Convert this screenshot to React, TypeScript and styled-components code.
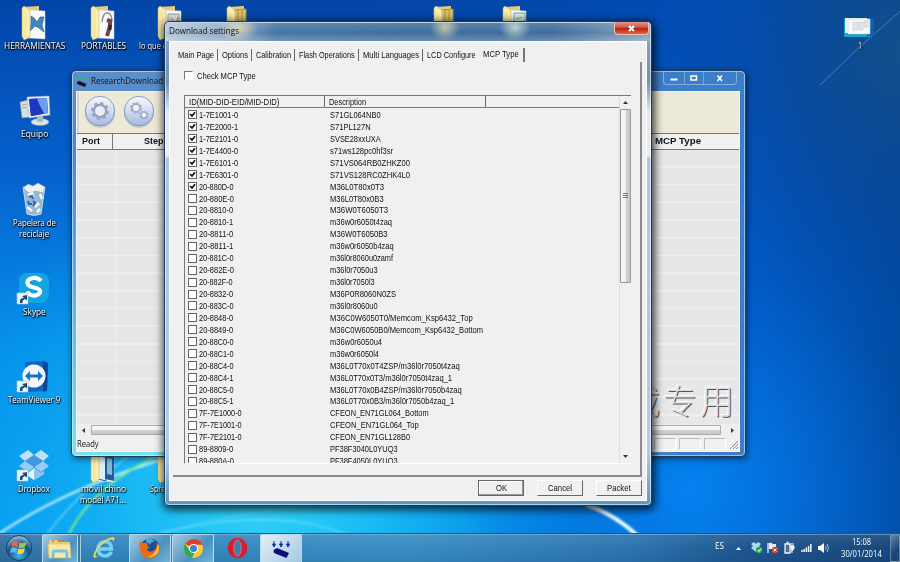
import React from "react";
import styled, { createGlobalStyle, css } from "styled-components";

const GlobalStyle = createGlobalStyle`
  body {
    margin: 0;
    overflow: hidden;
  }
  * {
    box-sizing: border-box;
  }
`;

const UI_FONT = `"Liberation Sans", Arial, sans-serif`;
const SEGOE = `"Open Sans", "Noto Sans", sans-serif`;

const rows: [string, string, number, number?][] = [
  ["1-7E1001-0", "S71GL064NB0", 51, 1],
  ["1-7E2000-1", "S71PL127N", 41, 1],
  ["1-7E2101-0", "SVSE28xxUXA", 51, 1],
  ["1-7E4400-0", "s71ws128pc0hf3sr", 63, 1],
  ["1-7E6101-0", "S71VS064RB0ZHKZ00", 80, 1],
  ["1-7E6301-0", "S71VS128RC0ZHK4L0", 80, 1],
  ["20-880D-0", "M36L0T80x0T3", 54, 1],
  ["20-880E-0", "M36L0T80x0B3", 54],
  ["20-8810-0", "M36W0T6050T3", 58],
  ["20-8810-1", "m36w0r6050t4zaq", 62],
  ["20-8811-0", "M36W0T6050B3", 58],
  ["20-8811-1", "m36w0r6050b4zaq", 64],
  ["20-881C-0", "m36l0r8060u0zamf", 63],
  ["20-882E-0", "m36l0r7050u3", 48],
  ["20-882F-0", "m36l0r7050l3", 45],
  ["20-8832-0", "M36P0R8060N0ZS", 66],
  ["20-883C-0", "m36l0r8060u0", 48],
  ["20-8848-0", "M36C0W6050T0/Memcom_Ksp6432_Top", 143],
  ["20-8849-0", "M36C0W6050B0/Memcom_Ksp6432_Bottom", 153],
  ["20-88C0-0", "m36w0r6050u4", 52],
  ["20-88C1-0", "m36w0r6050l4", 49],
  ["20-88C4-0", "M36L0T70x0T4ZSP/m36l0r7050t4zaq", 130],
  ["20-88C4-1", "M36L0T70x0T3/m36l0r7050t4zaq_1", 122],
  ["20-88C5-0", "M36L0T70x0B4ZSP/m36l0r7050b4zaq", 132],
  ["20-88C5-1", "M36L0T70x0B3/m36l0r7050b4zaq_1", 124],
  ["7F-7E1000-0", "CFEON_EN71GL064_Bottom", 99],
  ["7F-7E1001-0", "CFEON_EN71GL064_Top", 89],
  ["7F-7E2101-0", "CFEON_EN71GL128B0", 80],
  ["89-8809-0", "PF38F3040L0YUQ3", 68],
  ["89-880A-0", "PF38F4050L0YUQ3", 68],
];

const tabs: [string, number][] = [
  ["Main Page", 36],
  ["Options", 26],
  ["Calibration", 35],
  ["Flash Operations", 56],
  ["Multi Languages", 56],
  ["LCD Configure", 49],
  ["MCP Type", 36],
];

const Fit = ({ width, children }: { width: number; children: string }) => {
  const ref = React.useRef<HTMLSpanElement>(null);
  const [scale, setScale] = React.useState(1);
  React.useLayoutEffect(() => {
    if (ref.current) setScale(width / ref.current.offsetWidth);
  }, [width]);
  return (
    <FitBox $w={width}>
      <FitText ref={ref} style={{ transform: `scaleX(${scale})` }}>
        {children}
      </FitText>
    </FitBox>
  );
};

const idWidth = (id: string) => {
  if (id.length === 11) return 43;
  if (id.length === 10) return 39;
  return /[CDEA]/.test(id) ? 35 : 34;
};

const Folder = ({ kind }: { kind: string }) => (
  <svg width="26" height="36" viewBox={kind === "films" ? "-2 0 26 36" : "0 0 26 36"}>
    <path d="M2 2 L18 1 L18 30 L5 34 L2 31Z" fill="#e3cc78" />
    {kind !== "films" && <path d="M8 5 L24 6 L24 34 L8 33Z" fill="#f7f9fa" stroke="#c9d3da" strokeWidth=".5" />}
    {kind === "tools" && (
      <path d="M10 11 L13 13 L16 17 L19 12 L23 12 L21 20 L23 27 L18 23 L14 21 L9 26 L10 19Z" fill="#4285bd" stroke="#2c659c" strokeWidth=".7" />
    )}
    {kind === "knife" && (
      <g fill="none">
        <path d="M12 17 Q13 7 18 8 Q22 9 22 17" stroke="#858b90" strokeWidth="1.400" />
        <path d="M17 15 L20 16 V21 L17 31" stroke="#77424a" strokeWidth="4" />
        <path d="M20 20 V25" stroke="#2d2326" strokeWidth="3" />
      </g>
    )}
    {kind === "docs" && <path d="M11 9 H22 V31 H11Z M14 13 L19 18 L21 12" fill="#dfe2e0" stroke="#a4a08f" />}
    {kind === "films" && <path d="M8 5 L20 4 V33 H8Z M12 5 V33 M16 5 V33" fill="#d7c36d" stroke="#a8923f" />}
    {kind === "green" && <path d="M12 8 H23 V30 H12Z M14 14 L20 12" fill="#dcebe3" stroke="#6aa889" />}
    {kind === "phone" && (
      <g>
        <path d="M8 8 L16 9 V33 L8 31Z" fill="#d9eef5" stroke="#2f5d85" />
        <path d="M15 6 L24 8 V33 L15 31Z" fill="#1d5d9e" />
        <path d="M17 10 L22 11 V27 L17 26Z" fill="#7fb9db" />
      </g>
    )}
    <path d="M1 3 L3 1 L9 5 L9 32 L3 35 L1 31Z" fill="#f7e8a3" stroke="#d6b95c" strokeWidth=".5" />
    <path d="M3 4 L7 7 V31" fill="none" stroke="#fff8cf" />
  </svg>
);

const Shortcut = () => (
  <g>
    <rect x="1" y="21" width="11" height="11" fill="#f2f6fa" stroke="#a8b9cc" strokeWidth=".6" />
    <path d="M4 31 Q3 26 8 26 L6 24 L11 23 L11 28.500 L9 27 Q6 28 6.500 31Z" fill="#174b82" />
  </g>
);

const Computer = () => (
  <svg width="34" height="32" viewBox="0 0 34 32">
    <path d="M3 7 L11 5 L13 22 L5 23Z" fill="#dcdedb" stroke="#8d949a" strokeWidth=".6" />
    <path d="M5 10 L10 9 M5 13 L10 12" stroke="#9aa" />
    <ellipse cx="23" cy="27" rx="9" ry="3.500" fill="#dde3e8" stroke="#8e9ba7" strokeWidth=".6" />
    <path d="M20 19 H26 V27 H20Z" fill="#aeb8c2" />
    <path d="M10 2 L32 1 L33 20 L12 23Z" fill="#e8edf0" stroke="#a7b2bd" strokeWidth=".5" />
    <path d="M12 4 L30 3 L31 18 L14 21Z" fill="#132fae" />
    <path d="M19 3.500 L30 3 L31 18 L27 18.500Z" fill="#6e9bea" />
    <path d="M12 4 L20 3.500 L26 19 L14 21Z" fill="#1c39c0" />
  </svg>
);

const Bin = () => (
  <svg width="28" height="34" viewBox="0 0 28 34">
    <path d="M3 4 L25 4 L21 31 Q14 34 7 31Z" fill="#a9c1d2" fillOpacity=".9" stroke="#dcebf4" strokeWidth=".8" />
    <path d="M3 5 L8 1 L13 3 L18 0 L25 4 L23 10 L16 8 L9 10Z" fill="#eef2f3" stroke="#93a4ae" strokeWidth=".6" />
    <path d="M8 12 L12 10 L13 14 M20 11 L22 16 M19 20 L15 24 M7 24 L12 28 M20 26 L17 29" stroke="#f4f8fa" strokeWidth="2.500" fill="none" />
    <path d="M9 14 L12 13 L13 16 M8 18 L9 21 L12 21 M13 18 L15 20 L13 23" stroke="#2c63c8" strokeWidth="2" fill="none" />
  </svg>
);

const Skype = () => (
  <svg width="36" height="34" viewBox="0 0 36 34">
    <rect x="3" y="1" width="30" height="30" rx="8" fill="#12a5df" />
    <path d="M25 9 Q22 5.500 17 6 Q11 7 11.500 11 Q12 14.500 18 15.500 Q25 17 24 20.500 Q22 24 17 23.500 Q12.500 23 11 19.500" fill="none" stroke="#fff" strokeWidth="4.200" />
    <Shortcut />
  </svg>
);

const TeamViewer = () => (
  <svg width="36" height="34" viewBox="0 0 36 34">
    <path d="M9 2 L27 1 L32 3 L31 31 L10 32Z" fill="#1265c5" />
    <path d="M27 1 L32 3 L31 31 L27 32Z" fill="#0a489c" />
    <circle cx="18" cy="16" r="11.500" fill="#f4f8fc" />
    <path d="M9 16 L14 11 V14.500 H22 V11 L27 16 L22 21 V17.500 H14 V21Z" fill="#1675c8" />
    <Shortcut />
  </svg>
);

const DropboxIcon = () => (
  <svg width="36" height="34" viewBox="0 0 36 34">
    <path d="M3 7 L12 1 L18 6 L9 12Z M18 6 L25 1 L33 7 L27 12Z" fill="#bfe0fa" />
    <path d="M3 17 L9 12 L18 18 L12 23Z M18 18 L27 12 L33 17 L25 23Z" fill="#9acbf3" />
    <path d="M9 12 L18 6 L27 12 L18 18Z" fill="#4596df" />
    <path d="M9 22 L12 24 L18 19 L25 24 L28 22 V25 L18 31 L9 25Z" fill="#e6f5ff" />
    <path d="M18 19 L25 24 L28 22 V25 L18 31Z" fill="#8ec0ea" />
    <Shortcut />
  </svg>
);

const Stack = () => (
  <svg width="34" height="32" viewBox="1 -9 34 32">
    <rect x="2" y="3" width="26" height="18" fill="#12a2ce" />
    <rect x="25" y="2" width="7" height="18" fill="#0a60ba" />
    <path d="M3 2 H25 V17 H3Z" fill="#f2f8fa" />
    <path d="M6 3 H28 V18 H6Z" fill="#f8fafa" stroke="#b7ccd5" strokeWidth=".6" />
    <path d="M11 6 H16 V14 H11Z M17 6 H21 V14 H17Z M22 5 H26 V11 H22Z" fill="#e3e6e5" stroke="#b9c2c4" strokeWidth=".5" />
  </svg>
);

const ChipIcon = ({ size, green }: { size: number; green?: boolean }) => (
  <svg width={size} height={size} viewBox="0 0 18 18">
    <path
      d="M2 1 V5 M9 1 V5 M16 1 V5 M0.500 4 H3.500 L2 7Z M7.500 4 H10.500 L9 7Z M14.500 4 H17.500 L16 7Z"
      stroke={green ? "#25c968" : "#0c2bb0"}
      fill={green ? "#25c968" : "#0c2bb0"}
    />
    <path d="M1.500 10 L5 8 L17 13 L14.500 18 L2 13Z" fill={green ? "#10141b" : "#0a0f78"} />
  </svg>
);

const Gear = ({ cx, cy, r }: { cx: number; cy: number; r: number }) => (
  <g fill="none" stroke="#98a4be">
    <circle cx={cx} cy={cy} r={r} strokeWidth={r * 0.38} fill="#e9eef8" />
    <circle cx={cx} cy={cy} r={r * 1.28} strokeWidth={r * 0.35} strokeDasharray={`${r * 0.5} ${r * 0.505}`} />
  </g>
);

const RoundGear = ({ double }: { double?: boolean }) => (
  <svg width="32" height="34" viewBox="0 0 32 34">
    <defs>
      <linearGradient id="ball" x1="0" y1="0" x2="0" y2="1">
        <stop offset="0" stopColor="#f8f9fd" />
        <stop offset=".45" stopColor="#d7def1" />
        <stop offset="1" stopColor="#a5b9df" />
      </linearGradient>
    </defs>
    <ellipse cx="16" cy="18" rx="15" ry="15" fill="#99a5ba" fillOpacity=".5" />
    <circle cx="16" cy="16" r="14.700" fill="url(#ball)" stroke="#7f92bd" strokeWidth=".9" />
    {double ? (
      <g>
        <Gear cx={13} cy={13} r={4} />
        <Gear cx={21} cy={20} r={3} />
      </g>
    ) : (
      <Gear cx={16} cy={16} r={6.2} />
    )}
  </svg>
);

const Wallpaper = () => (
  <WallpaperSvg viewBox="0 0 900 562" width="900" height="562">
    <defs>
      <linearGradient id="sky" x1="0" y1="0" x2="0" y2="1">
        <stop offset="0" stopColor="#0345a8" />
        <stop offset=".28" stopColor="#055fcb" />
        <stop offset=".62" stopColor="#0590ea" />
        <stop offset="1" stopColor="#08a0f2" />
      </linearGradient>
      <linearGradient id="dark" x1="0" y1="0" x2="1" y2="0">
        <stop offset=".4" stopColor="#0048a8" stopOpacity="0" />
        <stop offset=".83" stopColor="#0052c0" stopOpacity=".82" />
        <stop offset="1" stopColor="#00459c" stopOpacity=".9" />
      </linearGradient>
      <radialGradient id="glow" gradientUnits="userSpaceOnUse" cx="260" cy="490" r="330">
        <stop offset="0" stopColor="#35d4f6" />
        <stop offset=".35" stopColor="#1fc3f6" stopOpacity=".8" />
        <stop offset="1" stopColor="#06a0f2" stopOpacity="0" />
      </radialGradient>
      <radialGradient id="mid" gradientUnits="userSpaceOnUse" cx="690" cy="490" r="230">
        <stop offset="0" stopColor="#0482f0" />
        <stop offset="1" stopColor="#0670e2" stopOpacity="0" />
      </radialGradient>
      <radialGradient id="topright" gradientUnits="userSpaceOnUse" cx="910" cy="50" r="260">
        <stop offset="0" stopColor="#14508a" />
        <stop offset="1" stopColor="#074292" stopOpacity="0" />
      </radialGradient>
      <filter id="soft">
        <feGaussianBlur stdDeviation="1" />
      </filter>
    </defs>
    <rect width="900" height="562" fill="url(#sky)" />
    <rect width="900" height="562" fill="url(#dark)" />
    <rect width="900" height="562" fill="url(#glow)" />
    <rect width="900" height="562" fill="url(#mid)" />
    <rect width="900" height="562" fill="url(#topright)" />
    <g fill="none" filter="url(#soft)">
      <path d="M-10 540 Q60 490 170 457" stroke="#d4f8ff" strokeWidth="2.500" strokeOpacity=".8" />
      <path d="M46 536 Q75 495 130 455" stroke="#a5edff" strokeWidth="1.200" strokeOpacity=".7" />
      <path d="M68 536 Q92 485 165 452" stroke="#79ed8b" strokeWidth="2" />
      <path d="M160 533 Q280 505 350 536" stroke="#a5f4ff" strokeOpacity=".4" strokeWidth="1.500" />
      <path d="M160 533 Q350 480 600 510" stroke="#a5f4ff" strokeOpacity=".3" />
      <path d="M585 504 Q615 514 640 538" stroke="#effcff" strokeWidth="4" />
    </g>
    <path d="M820 85 Q860 45 905 7" stroke="#81acd2" strokeOpacity=".5" fill="none" />
  </WallpaperSvg>
);

const icons = [
  { x: 34, y: 4, label: ["HERRAMIENTAS"], w: [61], art: <Folder kind="tools" /> },
  { x: 103, y: 4, label: ["PORTABLES"], w: [45], art: <Folder kind="knife" /> },
  { x: 170, y: 4, label: ["lo que descargo..."], w: [62], art: <Folder kind="docs" /> },
  { x: 237, y: 4, label: [], w: [], art: <Folder kind="films" /> },
  { x: 444, y: 4, label: [], w: [], art: <Folder kind="films" /> },
  { x: 515, y: 4, label: [], w: [], art: <Folder kind="green" /> },
  { x: 860, y: 4, label: ["1"], w: [4], art: <Stack /> },
  { x: 34, y: 92, label: ["Equipo"], w: [27], art: <Computer /> },
  { x: 34, y: 181, label: ["Papelera de", "reciclaje"], w: [43, 30], art: <Bin /> },
  { x: 34, y: 270, label: ["Skype"], w: [23], art: <Skype /> },
  { x: 34, y: 358, label: ["TeamViewer 9"], w: [52], art: <TeamViewer /> },
  { x: 34, y: 447, label: ["Dropbox"], w: [32], art: <DropboxIcon /> },
  { x: 103, y: 447, label: ["movil chino", "model A71..."], w: [45, 46], art: <Folder kind="phone" /> },
  { x: 170, y: 447, label: ["Spreadtrum"], w: [40], art: <Folder kind="docs" /> },
];

const ExplorerIcon = () => (
  <svg width="26" height="23" viewBox="0 0 26 23">
    <path d="M2 3 H10 L12 5 H23 V21 H2Z" fill="#e9ce72" />
    <path d="M5 4 H13 M15 4 H21" stroke="#df6a46" strokeWidth="1.500" strokeDasharray="2 4" />
    <path d="M1 7 H23 L24 21 H2Z" fill="#f8e9a4" stroke="#d6bc5b" strokeWidth=".6" />
    <path d="M6 21 V16 Q6 14 8 14 H18 Q20 14 20 16 V21" fill="none" stroke="#76c3e9" strokeWidth="3" />
  </svg>
);
const IeIcon = () => (
  <svg width="24" height="24" viewBox="0 0 24 24">
    <path d="M19.500 16 Q17 20 12.500 20 Q6 19 6 12.500 Q7 6 13 5.500 Q19.500 6 19.500 13 H8" fill="none" stroke="#72d2fa" strokeWidth="3.600" />
    <path d="M3 22 Q-1 21 5 12 Q13 2 21 1 Q24 2 21 6 Q22 2.500 17 4 Q8 8 4 17 Q2 21 6 20 Q5 21 3 22Z" fill="#f5d64a" />
  </svg>
);
const FirefoxIcon = () => (
  <svg width="23" height="23" viewBox="0 0 23 23">
    <circle cx="12" cy="11" r="9.500" fill="#184e95" />
    <path d="M8 2 Q14 0 17 5 Q13 4 12 8 Q10 5 8 5Z" fill="#53a5d8" />
    <path d="M2 4 L5 6 Q8 5 10 7 L9 9 L12 10 L9 12 Q10 16 15 14 Q20 12 18 5 Q24 11 20 17 Q15 23 8 21 Q0 17 2 4Z" fill="#e96b16" />
    <path d="M20 7 Q23 12 19 17 Q15 21 10 20 Q18 18 20 7Z" fill="#f9bd3a" />
  </svg>
);
const ChromeIcon = () => (
  <svg width="21" height="21" viewBox="0 0 22 22">
    <circle cx="11" cy="11" r="10" fill="#f8ce38" />
    <path d="M11 11 L2 6 Q6 1 11 1 Q18 1 20.500 7 H11Z" fill="#dc4032" />
    <path d="M2 6 L8 14 L12 15 L9.500 21 Q1 19 1 11 Q1 8 2 6Z" fill="#35a554" />
    <circle cx="11" cy="11" r="4.800" fill="#fff" />
    <circle cx="11" cy="11" r="3.700" fill="#3e82d7" />
  </svg>
);
const OperaIcon = () => (
  <svg width="21" height="22" viewBox="0 0 21 22">
    <ellipse cx="10.500" cy="11" rx="9.800" ry="10.300" fill="#d91d2b" />
    <ellipse cx="10.500" cy="11" rx="3.700" ry="8.300" fill="#3e7cae" stroke="#f5929a" strokeWidth=".6" />
  </svg>
);
const StartOrb = () => (
  <svg width="28" height="28" viewBox="0 0 28 28">
    <defs>
      <radialGradient id="orb" cx=".5" cy=".8" r=".75">
        <stop offset="0" stopColor="#38b7df" />
        <stop offset=".6" stopColor="#185386" />
        <stop offset="1" stopColor="#8ab7d5" />
      </radialGradient>
    </defs>
    <circle cx="14" cy="14" r="12.500" fill="url(#orb)" stroke="#123f69" />
    <path d="M7.500 8 Q10.500 6 13.500 8 L12.500 13 Q9.500 11.500 6.500 13Z" fill="#ee653b" />
    <path d="M14.500 8.500 Q18 10 21.500 8 L20 13 Q17 15 13.500 13.500Z" fill="#95cb4f" />
    <path d="M6 14 Q9 12.500 12.300 14 L11 19 Q8 17.500 5 19Z" fill="#59b6ee" />
    <path d="M13.300 14.500 Q16.500 16 20 14 L18.500 19 Q15 21 12 19.500Z" fill="#f7ce45" />
  </svg>
);
const TrayIcons = () => (
  <svg width="94" height="16" viewBox="0 0 94 16">
    <path d="M0 10 L2.500 7 L5 10Z" fill="#fff" />
    <path d="M15 4 L18 2 L20 4 L22 2 L25 4 L23 6 L25 8 L20 12 L15 8 L17 6Z" fill="#a4e2fa" />
    <circle cx="23" cy="10" r="3.200" fill="#34a94b" />
    <path d="M21.500 10 L23 11.500 L25 8.500" stroke="#fff" fill="none" />
    <path d="M32 3 V13" stroke="#fff" strokeWidth="1.200" />
    <path d="M33 3 Q35 2 37 4 H40 V9 H33Z" fill="#e9eef4" />
    <circle cx="39" cy="10" r="3.200" fill="#d7422f" />
    <path d="M37.600 8.600 L40.400 11.400 M40.400 8.600 L37.600 11.400" stroke="#fff" />
    <path d="M49 4 H54 V13 H49Z M50.500 2.500 H52.500" fill="#506d8d" stroke="#f1f5f8" strokeWidth="1.300" />
    <path d="M54 6 H58 V9 L56 11 V13 M55 6 V3 M57 6 V3" fill="#f1f5f8" stroke="#f1f5f8" />
    <path d="M66 12 V10 M68.200 12 V9 M70.400 12 V7.500 M72.600 12 V6 M74.800 12 V4" stroke="#f2f7fb" strokeWidth="1.500" />
    <path d="M82 6 H84 L88 3 V13 L84 10 H82Z" fill="#fff" />
    <path d="M89.500 6 Q91 8 89.500 10 M91 4 Q94 8 91 12" stroke="#c9dceb" fill="none" strokeWidth=".8" />
  </svg>
);

const Arrow = ({ dir }: { dir: "up" | "down" | "left" | "right" }) => {
  const paths = { up: "M1 5L3.500 2L6 5Z", down: "M1 2L3.500 5L6 2Z", left: "M5 1L2 3.500L5 6Z", right: "M2 1L5 3.500L2 6Z" };
  return (
    <svg width="7" height="7" viewBox="0 0 7 7">
      <path d={paths[dir]} fill="#34373d" />
    </svg>
  );
};

const App = () => (
  <Desktop>
    <GlobalStyle />
    <Wallpaper />
    {icons.map((icon, i) => (
      <DesktopIcon key={i} $x={icon.x} $y={icon.y}>
        <IconArt>{icon.art}</IconArt>
        {icon.label.map((line, n) => (
          <IconLabel key={line}>
            <Fit width={icon.w[n]}>{line}</Fit>
          </IconLabel>
        ))}
      </DesktopIcon>
    ))}

    <MainWindow>
      <MainTitle>
        <ChipIcon size={11} green />
        <Fit width={72}>ResearchDownload</Fit>
        <CaptionButtons>
          <CaptionButton $w={20}>
            <svg width="8" height="8"><path d="M0.500 5.500H7.500" stroke="#fff" strokeWidth="2" /></svg>
          </CaptionButton>
          <CaptionButton $w={19}>
            <svg width="8" height="8"><rect x="1" y="2" width="5.500" height="4" fill="none" stroke="#fff" strokeWidth="1.500" /></svg>
          </CaptionButton>
          <CaptionButton $w={33}>
            <svg width="8" height="8"><path d="M1.500 1.500L6 7M6 1.500L1.500 7" stroke="#fff" strokeWidth="1.600" /></svg>
          </CaptionButton>
        </CaptionButtons>
      </MainTitle>
      <MainClient>
        <Toolbar>
          <RoundGear />
          <RoundGear double />
        </Toolbar>
        <GridHeader>
          <GridCell $w={36}><Fit width={18}>Port</Fit></GridCell>
          <GridCell $w={542} $step><Fit width={20}>Step</Fit></GridCell>
          <GridCell $w={85} $last><Fit width={46}>MCP Type</Fit></GridCell>
        </GridHeader>
        <GridBody>
          <GridColumn />
          <Watermark>载专用</Watermark>
        </GridBody>
        <HScroll>
          <Arrow dir="left" />
          <HThumb />
          <Arrow dir="right" />
        </HScroll>
        <StatusBar>
          <Fit width={22}>Ready</Fit>
          <StatusPanes>
            <Pane />
            <Pane />
            <Pane />
            <svg width="10" height="10"><path d="M1 9L9 1M4 9L9 4M7 9L9 7" stroke="#8d8d8d" /></svg>
          </StatusPanes>
        </StatusBar>
      </MainClient>
    </MainWindow>

    <Dialog>
      <DialogTitle>
        <Fit width={70}>Download settings</Fit>
        <CloseButton>
          <svg width="9" height="9"><path d="M2 2L7 7M7 2L2 7" stroke="#fff" strokeWidth="1.900" /></svg>
        </CloseButton>
      </DialogTitle>
      <DialogClient>
        <TabRow>
          {tabs.map(([name, width], i) => (
            <Tab key={name} $active={i === 6} $beforeActive={i === 5}>
              <Fit width={width}>{name}</Fit>
            </Tab>
          ))}
        </TabRow>
        <TabSheet>
          <CheckLine>
            <BigCheck />
            <Fit width={59}>Check MCP Type</Fit>
          </CheckLine>
          <ListFrame>
            <ListMain>
              <ListHeader>
                <HeaderCell $w={140}><Fit width={90}>ID(MID-DID-EID/MID-DID)</Fit></HeaderCell>
                <HeaderCell $w={161}><Fit width={37}>Description</Fit></HeaderCell>
              </ListHeader>
              <ListBody>
                {rows.map(([id, desc, width, checked]) => (
                  <ListRow key={id}>
                    <Check>
                      {checked && (
                        <svg width="7" height="7"><path d="M1 3L3 5L6 1.300" fill="none" stroke="#111" strokeWidth="1.700" /></svg>
                      )}
                    </Check>
                    <IdCell><Fit width={idWidth(id)}>{id}</Fit></IdCell>
                    <Fit width={width}>{desc}</Fit>
                  </ListRow>
                ))}
              </ListBody>
            </ListMain>
            <VScroll>
              <Arrow dir="up" />
              <VThumb>
                <svg width="5" height="6"><path d="M0 .5H5M0 2.500H5M0 4.500H5" stroke="#55585f" strokeWidth=".8" /></svg>
              </VThumb>
              <Arrow dir="down" />
            </VScroll>
          </ListFrame>
        </TabSheet>
        <ButtonRow>
          <Button $primary><Fit width={11}>OK</Fit></Button>
          <Button><Fit width={24}>Cancel</Fit></Button>
          <Button><Fit width={24}>Packet</Fit></Button>
        </ButtonRow>
      </DialogClient>
    </Dialog>

    <Taskbar>
      <Orb><StartOrb /></Orb>
      <Task $w={36} $open $stacked><ExplorerIcon /></Task>
      <Task $w={49}><IeIcon /></Task>
      <Task $w={42} $open><FirefoxIcon /></Task>
      <Task $w={42} $open><ChromeIcon /></Task>
      <Task $w={44}><OperaIcon /></Task>
      <Task $w={42} $open $active><ChipIcon size={18} /></Task>
      <Tray>
        <Language><Fit width={9}>ES</Fit></Language>
        <TrayIcons />
        <Clock>
          <Fit width={19}>15:08</Fit>
          <Fit width={41}>30/01/2014</Fit>
        </Clock>
        <ShowDesktop />
      </Tray>
    </Taskbar>
  </Desktop>
);

export default App;

const FitBox = styled.span<{ $w: number }>`
  display: block;
  flex: none;
  width: ${({ $w }) => $w}px;
  white-space: nowrap;
`;
const FitText = styled.span`
  display: inline-block;
  transform-origin: 0 50%;
`;
const Desktop = styled.div`
  position: relative;
  width: 900px;
  height: 562px;
  overflow: hidden;
  font: 9px/12px ${UI_FONT};
  color: #111;
`;
const WallpaperSvg = styled.svg`
  position: absolute;
  inset: 0;
`;
const DesktopIcon = styled.div<{ $x: number; $y: number }>`
  position: absolute;
  left: ${({ $x }) => $x - 35}px;
  top: ${({ $y }) => $y}px;
  width: 70px;
  display: flex;
  flex-direction: column;
  align-items: center;
`;
const IconArt = styled.div`
  height: 37px;
  display: flex;
  align-items: center;
  justify-content: center;
  svg {
    display: block;
  }
`;
const IconLabel = styled.div`
  font: 9px/10.5px ${SEGOE};
  color: #fff;
  text-shadow: 0 1px 2px #000, 1px 1px 1px #000, 0 0 2px #0008;
`;
const windowFrame = css`
  position: absolute;
  display: flex;
  flex-direction: column;
  border: 1px solid #253c58;
  border-radius: 5px;
`;
const MainWindow = styled.div`
  ${windowFrame}
  left: 71px;
  top: 70px;
  width: 675px;
  height: 387px;
  padding: 0 5px 4px 4px;
  background: linear-gradient(90deg, #3b7ec900 60%, #3b7ec9 90%),
    linear-gradient(#5b8ecd 0, #5286c6 80px, #59a5de 180px, #78e2ed 100%);
  box-shadow: inset 0 0 0 1px #ffffff80, 1px 2px 6px #0008;
`;
const MainTitle = styled.div`
  height: 20px;
  display: flex;
  align-items: center;
  gap: 4px;
  font: 9px/12px ${SEGOE};
  flex: none;
`;
const CaptionButtons = styled.div`
  display: flex;
  align-self: flex-start;
  margin: 1px 3px 0 auto;
  border: 1px solid #a9c6e4aa;
  border-top: 0;
  border-radius: 0 0 4px 4px;
`;
const CaptionButton = styled.div<{ $w: number }>`
  width: ${({ $w }) => $w}px;
  height: 12px;
  display: flex;
  align-items: center;
  justify-content: center;
  & + & {
    border-left: 1px solid #a9c6e488;
  }
`;
const MainClient = styled.div`
  flex: 1;
  min-height: 0;
  display: flex;
  flex-direction: column;
  background: #f0f0f0;
  border: 1px solid #eef4f9;
`;
const Toolbar = styled.div`
  height: 41px;
  flex: none;
  display: flex;
  gap: 7px;
  padding: 3px 5px;
  background: #ece9d8;
  border-left: 2px solid #d5d4cb;
`;
const GridHeader = styled.div`
  height: 17px;
  flex: none;
  display: flex;
  border: 1px solid #777;
  border-width: 1px 0 1.5px;
  background: #f1f1f1;
  font-weight: bold;
  font-size: 9.5px;
`;
const GridCell = styled.div<{ $w: number; $step?: boolean; $last?: boolean }>`
  width: ${({ $w }) => $w}px;
  padding: 1px 0 0 ${({ $step, $last }) => ($step ? 31 : $last ? 1 : 5)}px;
  border-right: ${({ $step, $last }) => ($step || $last ? "0" : "1px solid #777")};
`;
const GridBody = styled.div`
  position: relative;
  flex: 1;
  display: flex;
  background: repeating-linear-gradient(#e7e7e7 0 16px, #efefef 16px 17.7px);
`;
const GridColumn = styled.div`
  width: 39px;
  border-right: 1px solid #f0f0f0;
`;
const Watermark = styled.div`
  position: absolute;
  right: 2px;
  bottom: 3px;
  font: 300 34px/42px "Noto Sans CJK SC", sans-serif;
  letter-spacing: 3px;
  color: #dcdcdc;
  text-shadow: 1px 1px 0 #555, -1px -1px 0 #fff;
`;
const HScroll = styled.div`
  height: 12px;
  flex: none;
  display: flex;
  align-items: center;
  gap: 4px;
  padding: 0 3px;
  background: #eee;
`;
const HThumb = styled.div`
  flex: 1;
  height: 10px;
  margin-right: 4px;
  border: 1px solid #aaa;
  border-radius: 1px;
  background: linear-gradient(#f6f6f6 45%, #d3d3d6 55%, #c6c6ca);
`;
const StatusBar = styled.div`
  height: 15px;
  flex: none;
  display: flex;
  align-items: center;
  justify-content: space-between;
  padding-top: 1px;
  font: 9px/12px ${SEGOE};
`;
const StatusPanes = styled.div`
  display: flex;
  align-items: flex-end;
  gap: 3px;
`;
const Pane = styled.div`
  width: 22px;
  height: 12px;
  border: 1px solid #bcbcbc;
  border-right-color: #fff;
  border-bottom-color: #fff;
`;
const Dialog = styled.div`
  ${windowFrame}
  left: 164px;
  top: 21px;
  width: 488px;
  height: 485px;
  padding: 0 4px 4px;
  background: linear-gradient(#8ba9cb 0, #6e91b7 60px, #dfe9f2 90px, #e7eef5 134px, #aac6e4 136px, #afcbea 430px, #5596c4 100%);
  box-shadow: inset 0 0 0 1px #ffffff90, 1px 2px 8px 2px #000b;
`;
const DialogTitle = styled.div`
  flex: none;
  height: 19px;
  margin: 0 -3px;
  padding: 0 1px 2px 3px;
  display: flex;
  align-items: center;
  justify-content: space-between;
  font: 9.5px/12px ${SEGOE};
  border-radius: 4px 4px 0 0;
  border-top: 1px solid #c2d5e7;
  background: radial-gradient(ellipse 20px 14px at 72px 5px, #d8d5b4, #d8d5b400),
    radial-gradient(ellipse 15px 14px at 279px 4px, #c1c8a5, #c1c8a500),
    radial-gradient(ellipse 16px 14px at 349px 4px, #bcd0cb, #bcd0cb00),
    linear-gradient(#ffffff20, #ffffff05 45%, #00306010 50%, #ffffff35),
    linear-gradient(90deg, #b9cadb 0, #91abc8 65px, #4877a8 110px, #426f9f 50%, #436f9f 80%, #8ba4be);
`;
const CloseButton = styled.div`
  width: 35px;
  height: 13px;
  align-self: flex-start;
  margin-top: -1px;
  display: flex;
  align-items: center;
  justify-content: center;
  border: 1px solid #ecc0b7;
  border-top: 0;
  border-radius: 0 0 4px 4px;
  background: linear-gradient(#e09584, #cf5a49 45%, #b6200d 50%, #db6547);
`;
const DialogClient = styled.div`
  flex: 1;
  min-height: 0;
  display: flex;
  flex-direction: column;
  padding: 7px 4px 0 3px;
  border: 1px solid #fff;
  background: #f0f0f0;
`;
const TabRow = styled.div`
  display: flex;
  height: 13px;
  flex: none;
  padding-left: 5px;
`;
const Tab = styled.div<{ $active?: boolean; $beforeActive?: boolean }>`
  padding-right: 3px;
  margin-right: 4px;
  height: 12px;
  border-right: 1px solid ${({ $beforeActive }) => ($beforeActive ? "transparent" : "#666")};
  ${({ $active }) => $active && css`
    margin-top: -1px;
    margin-left: -1px;
    padding-right: 4px;
    height: 14px;
    border-right-width: 2px;
    border-right-color: #777;
  `}
`;
const TabSheet = styled.div`
  height: 415px;
  flex: none;
  display: flex;
  flex-direction: column;
  padding: 7px 9px 0 11px;
  border-right: 2px solid #8a8a8a;
  border-bottom: 2px solid #8a8a8a;
`;
const CheckLine = styled.div`
  display: flex;
  align-items: center;
  gap: 4px;
  height: 13px;
  margin-bottom: 13px;
`;
const BigCheck = styled.div`
  width: 9px;
  height: 9px;
  border: 1px solid #777;
  border-right-color: #fff;
  border-bottom-color: #fff;
  background: #fff;
`;
const ListFrame = styled.div`
  display: flex;
  height: 369px;
  border-top: 1px solid #777;
  border-left: 1px solid #777;
  border-bottom: 1px solid #fff;
`;
const ListMain = styled.div`
  flex: 1;
  min-width: 0;
`;
const ListHeader = styled.div`
  height: 12px;
  display: flex;
  border-bottom: 1px solid #777;
`;
const HeaderCell = styled.div<{ $w: number }>`
  width: ${({ $w }) => $w}px;
  padding-left: 4px;
  border-right: 1px solid #666;
`;
const ListBody = styled.div`
  height: 355px;
  padding-top: 1px;
  overflow: hidden;
`;
const ListRow = styled.div`
  height: 11.95px;
  display: flex;
  align-items: center;
  padding-left: 3px;
`;
const Check = styled.div`
  width: 9px;
  height: 9px;
  margin-right: 2px;
  flex: none;
  display: flex;
  border: 1px solid #666;
  background: #fff;
`;
const IdCell = styled.div`
  width: 131px;
  flex: none;
`;
const VScroll = styled.div`
  width: 12px;
  display: flex;
  flex-direction: column;
  align-items: center;
  padding: 3px 0;
  border-left: 1px solid #ddd;
  svg:last-child {
    margin-top: auto;
  }
`;
const VThumb = styled.div`
  width: 11px;
  height: 174px;
  margin-top: 3px;
  display: flex;
  align-items: center;
  justify-content: center;
  border: 1px solid #999;
  border-radius: 1px;
  background: linear-gradient(90deg, #f5f5f5 45%, #d5d5d8 55%, #c5c5ca);
  svg:last-child {
    margin: 0;
  }
`;
const ButtonRow = styled.div`
  display: flex;
  justify-content: flex-end;
  gap: 13px;
  margin-top: 3px;
`;
const Button = styled.div<{ $primary?: boolean }>`
  width: 46px;
  height: 16px;
  display: flex;
  align-items: center;
  justify-content: center;
  border: 1px solid #fff;
  border-right-color: #666;
  border-bottom-color: #666;
  ${({ $primary }) => $primary && css`
    border-color: #666;
    box-shadow: inset -1px -1px #999, inset 1px 1px #fff;
  `}
`;
const Taskbar = styled.div`
  position: absolute;
  left: 0;
  right: 0;
  bottom: 0;
  height: 29px;
  display: flex;
  border-top: 1px solid #29537c;
  box-shadow: inset 0 1px #91c3e480;
  background: linear-gradient(#ffffff16, #ffffff00 50%, #00204018),
    linear-gradient(90deg, #326f9e 0, #3487bd 10%, #398dc3 45%, #2d75b0 70%, #1e558f 83%, #19477b);
`;
const Orb = styled.div`
  width: 42px;
  padding-left: 5px;
`;
const Task = styled.div<{ $w: number; $open?: boolean; $active?: boolean; $stacked?: boolean }>`
  width: ${({ $w }) => $w}px;
  margin-right: ${({ $open }) => ($open ? 1.5 : 0)}px;
  display: flex;
  align-items: center;
  justify-content: center;
  ${({ $open, $active }) => $open && css`
    border: 1px solid #b7d9ee;
    border-bottom: 0;
    border-radius: 2px 2px 0 0;
    background: linear-gradient(135deg, ${$active ? "#e4eff7, #a3c9e3" : "#a6cbe2, #4b91bf 60%, #72b4d8"});
  `}
  ${({ $stacked }) => $stacked && "box-shadow: 2px 0 #3d789f, 3px 0 #a5cde2;"}
`;
const Tray = styled.div`
  margin-left: auto;
  display: flex;
  align-items: center;
  color: #fff;
  font: 9px/12.5px ${SEGOE};
`;
const Language = styled.div`
  margin-right: 12px;
  margin-top: -4px;
`;
const Clock = styled.div`
  width: 58px;
  margin-left: 2px;
  display: flex;
  flex-direction: column;
  align-items: center;
`;
const ShowDesktop = styled.div`
  width: 10px;
  height: 27px;
  border: 1px solid #9bb7d088;
  background: linear-gradient(135deg, #86a2bd99, #1b477999 60%);
`;
